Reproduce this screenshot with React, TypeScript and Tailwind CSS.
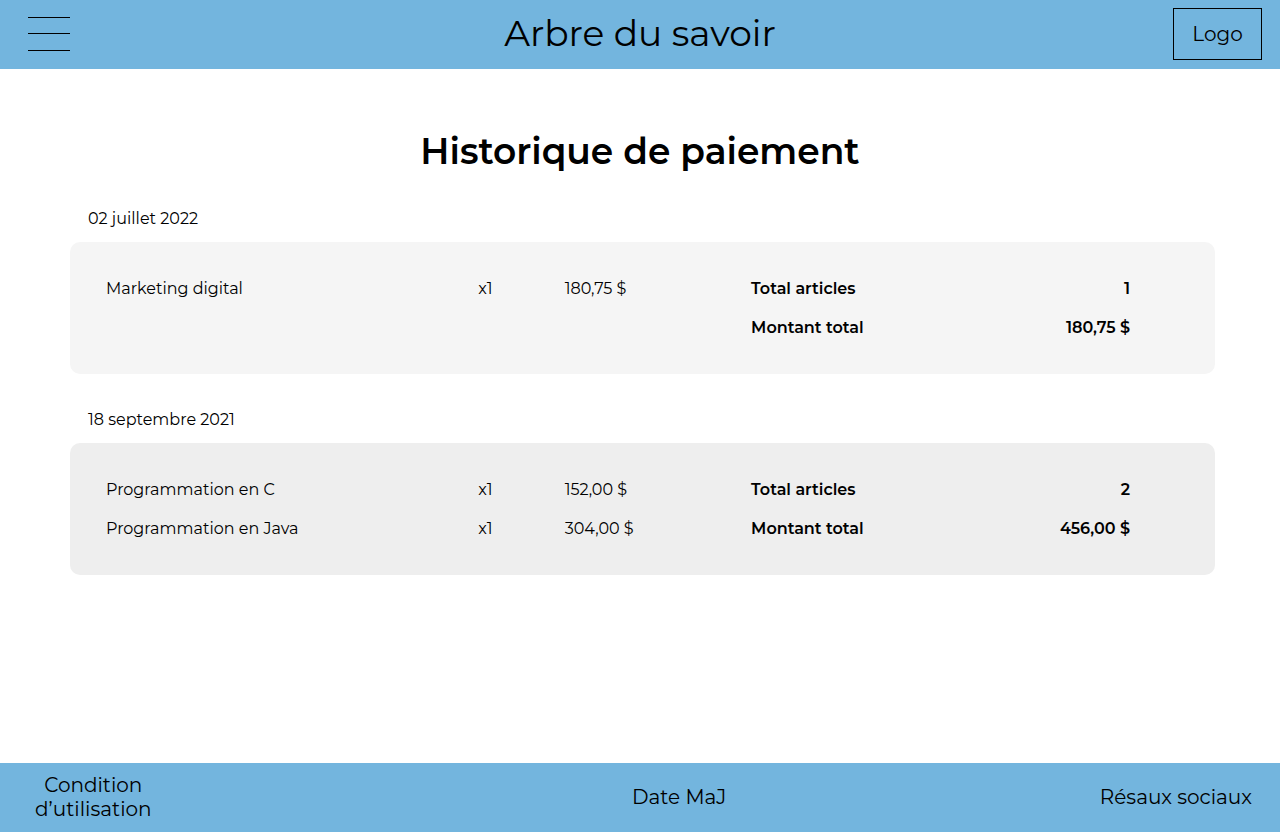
type Item = { name: string; quantity: number; price: string };

type Payment = {
  date: string;
  items: Item[];
  count: number;
  total: string;
  tone: string;
};

const payments: Payment[] = [
  {
    date: "02 juillet 2022",
    items: [{ name: "Marketing digital", quantity: 1, price: "180,75 $" }],
    count: 1,
    total: "180,75 $",
    tone: "bg-[#f5f5f5]",
  },
  {
    date: "18 septembre 2021",
    items: [
      { name: "Programmation en C", quantity: 1, price: "152,00 $" },
      { name: "Programmation en Java", quantity: 1, price: "304,00 $" },
    ],
    count: 2,
    total: "456,00 $",
    tone: "bg-[#eeeeee]",
  },
];

function Header() {
  return (
    <header className="grid min-h-[69px] grid-cols-[1fr_auto_1fr] items-center bg-[#73b5de] pb-px">
      <button type="button" aria-label="Menu" className="ml-7 w-fit">
        <svg width="42" height="34" viewBox="0 0 42 34" fill="black" shapeRendering="crispEdges">
          <rect y="0" width="42" height="1" />
          <rect y="16" width="42" height="1" />
          <rect y="33" width="42" height="1" />
        </svg>
      </button>
      <p className="pb-0.5 text-4xl leading-[44px]">Arbre du savoir</p>
      <a
        href="#"
        className="mr-[18px] flex h-[52px] w-[89px] items-center justify-center justify-self-end border border-black text-xl"
      >
        Logo
      </a>
    </header>
  );
}

function PaymentCard({ payment }: { payment: Payment }) {
  return (
    <section>
      <h2 className="pl-[18px] text-base leading-6">{payment.date}</h2>
      <div className={`mt-[11px] flex items-start rounded-[10px] py-[27px] pr-[85px] pl-9 ${payment.tone}`}>
        <table aria-label={payment.date} className="w-[63%] table-fixed text-left">
          <colgroup>
            <col className="w-[57.7%]" />
            <col className="w-[13.4%]" />
            <col />
          </colgroup>
          <tbody>
            {payment.items.map((item) => (
              <tr key={item.name} className="h-[39px]">
                <td className="p-0">{item.name}</td>
                <td className="p-0">x{item.quantity}</td>
                <td className="p-0">{item.price}</td>
              </tr>
            ))}
          </tbody>
        </table>
        <dl className="grid flex-1 grid-cols-[1fr_auto] font-semibold leading-[39px]">
          <dt>Total articles</dt>
          <dd className="text-right">{payment.count}</dd>
          <dt>Montant total</dt>
          <dd className="text-right">{payment.total}</dd>
        </dl>
      </div>
    </section>
  );
}

function Footer() {
  return (
    <footer className="grid min-h-[69px] grid-cols-[50%_1fr_auto] items-center bg-[#73b5de] pr-7 pb-0.5 text-xl leading-6">
      <a href="#" className="ml-[35px] w-fit text-center">
        Condition
        <br />
        d’utilisation
      </a>
      <p className="pl-1.5">Date MaJ</p>
      <a href="#">Résaux sociaux</a>
    </footer>
  );
}

export default function App() {
  return (
    <div className="flex min-h-screen flex-col bg-white font-['Montserrat','Inter',sans-serif] text-base text-black">
      <Header />
      <main className="flex flex-1 flex-col gap-[34px] pt-[60px] pr-[65px] pb-10 pl-[70px]">
        <h1 className="-mr-[65px] -ml-[70px] text-center text-4xl leading-[44px] font-semibold">
          Historique de paiement
        </h1>
        {payments.map((payment) => (
          <PaymentCard key={payment.date} payment={payment} />
        ))}
      </main>
      <Footer />
    </div>
  );
}
